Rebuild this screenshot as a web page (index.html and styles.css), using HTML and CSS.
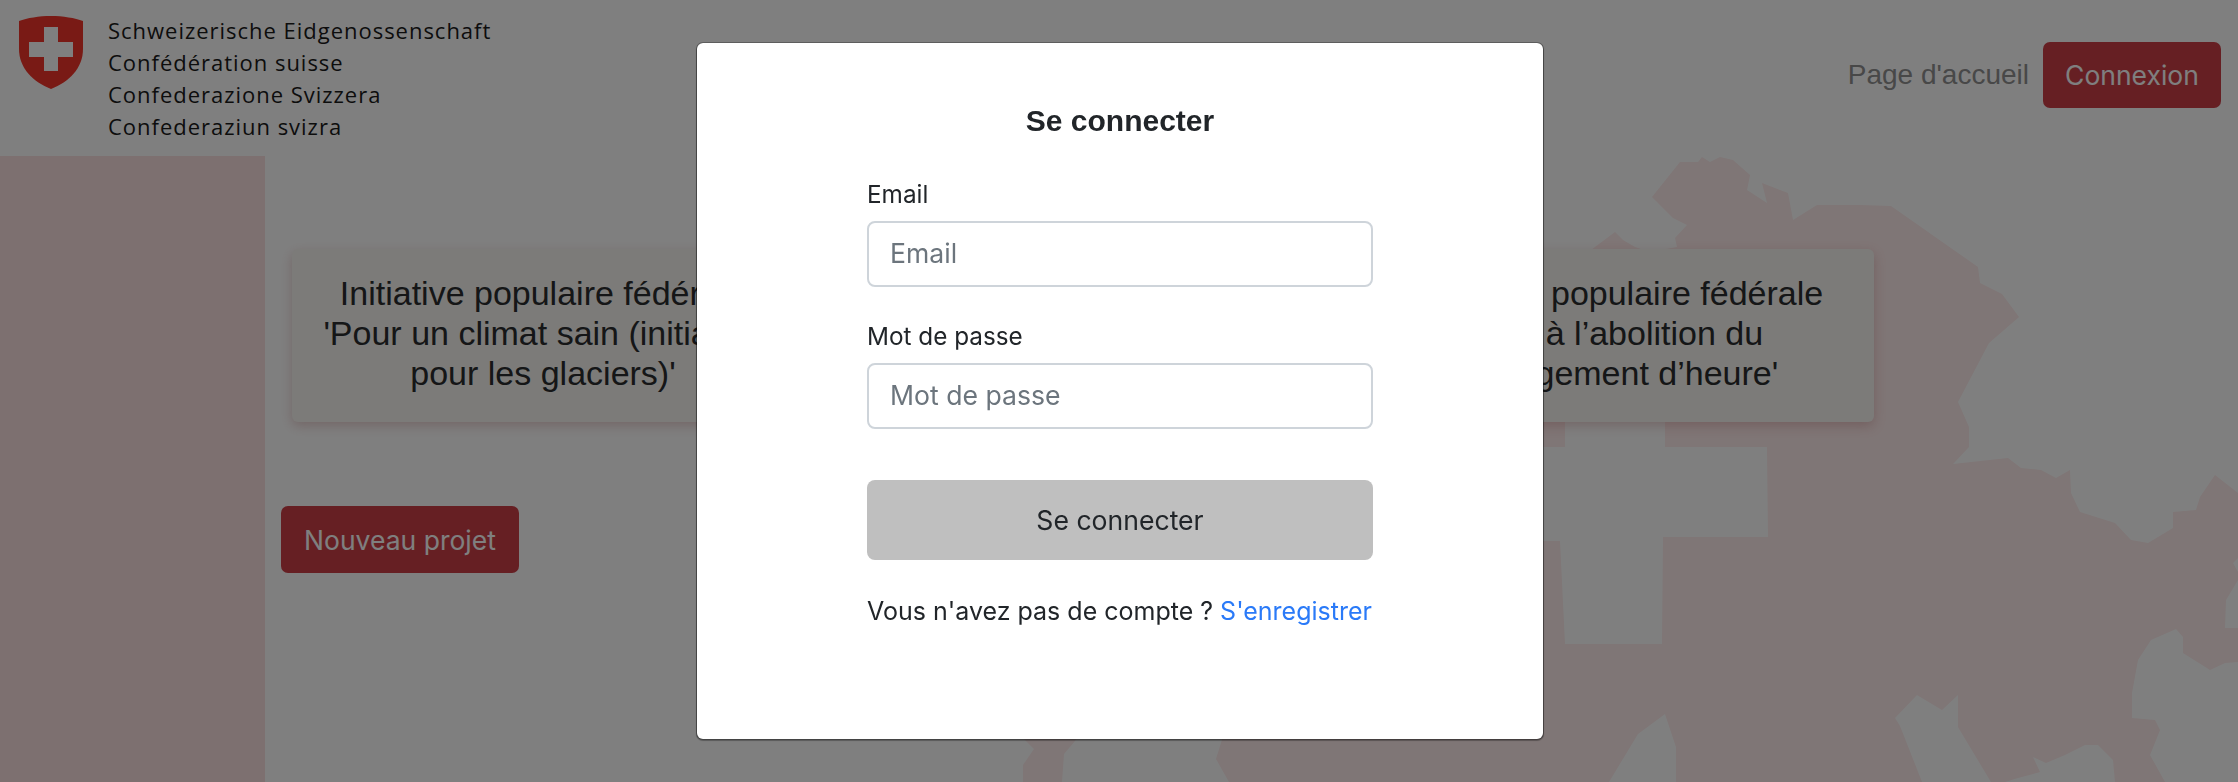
FILE: index.html
```html
<!DOCTYPE html>
<html lang="fr">
<head>
  <meta charset="UTF-8" />
  <title>Connexion</title>
  <link rel="stylesheet" href="styles.css">
</head>
<body>
  <header class="topbar">
    <div class="brand">
      <svg class="shield" viewBox="0 0 64 73" aria-hidden="true">
        <path class="shield-red" d="M0 5 C8 2 20 0 32 0 C44 0 56 2 64 5 L64 33 C64 52 50 66 32 73 C14 66 0 52 0 33 Z"/>
        <path class="shield-cross" d="M25 11 H39 V26 H54 V41 H39 V55 H25 V41 H10 V26 H25 Z"/>
      </svg>
      <div class="brand-name">
        <div>Schweizerische Eidgenossenschaft</div>
        <div>Confédération suisse</div>
        <div>Confederazione Svizzera</div>
        <div>Confederaziun svizra</div>
      </div>
    </div>
    <nav class="nav">
      <a class="nav-link" href="#">Page d'accueil</a>
      <a class="btn-red" href="#">Connexion</a>
    </nav>
  </header>

  <main class="main">
    <svg class="map" viewBox="0 156 2238 626" aria-hidden="true">
      <path class="map-land" d="M1595 247 L1615 232 L1623 240 L1635 247 L1650 252 L1677 247 L1675 238 L1687 225 L1673 218 L1652 197 L1680 162 L1698 162 L1702 157 L1710 162 L1720 157 L1733 160 L1750 175 L1747 190 L1767 203 L1762 183 L1788 193 L1793 220 L1817 205 L1860 205 L1891 206 L1978 267 L1980 283 L2002 294 L2019 317 L1989 343 L1958 402 L1969 427 L1969 447 L1953 464 L2008 458 L2021 468 L2041 470 L2056 478 L2070 470 L2071 493 L2080 512 L2115 523 L2131 540 L2148 543 L2173 528 L2173 512 L2196 510 L2200 497 L2215 475 L2238 493 L2238 558 L2233 563 L2238 572 L2238 580 L2226 600 L2225 628 L2238 628 L2238 662 L2225 663 L2210 670 L2183 653 L2183 637 L2176 629 L2151 640 L2138 660 L2132 693 L2132 718 L2155 720 L2160 730 L2150 755 L2165 782 L2115 782 L2113 760 L2098 745 L2085 745 L2065 755 L2046 763 L2033 757 L2040 772 L2018 778 L2005 782 L1991 782 L1958 727 L1958 695 L1942 710 L1917 695 L1895 718 L1900 726 L1922 782 L1676 782 L1676 747 L1665 714 L1638 734 L1609 782 L1229 782 L1216 759 L1225 730 L1400 400 Z"/>
      <path class="map-land" d="M1020 735 L1034 749 L1023 765 L1023 782 L1062 782 L1064 754 L1080 735 Z"/>
      <path class="map-cross" d="M1565 400 L1665 400 L1665 447 L1767 447 L1768 537 L1663 537 L1662 644 L1565 644 L1560 541 L1400 541 L1400 447 L1565 447 Z"/>
    </svg>
    <aside class="sidebar"></aside>
    <section class="content">
      <div class="projects">
        <div class="project-card">Initiative populaire fédérale 'Pour un climat sain (initiative pour les glaciers)'</div>
        <div class="project-card">Initiative populaire fédérale 'Oui à l’abolition du changement d’heure'</div>
      </div>
      <a class="btn-red btn-new" href="#">Nouveau projet</a>
    </section>
  </main>

  <div class="backdrop">
    <div class="modal">
      <h2 class="modal-title">Se connecter</h2>
      <form class="login-form">
        <div class="field">
          <label for="email">Email</label>
          <input id="email" type="email" placeholder="Email" />
        </div>
        <div class="field">
          <label for="password">Mot de passe</label>
          <input id="password" type="password" placeholder="Mot de passe" />
        </div>
        <button class="btn-submit" type="button">Se connecter</button>
        <p class="register">Vous n'avez pas de compte ? <a href="#">S'enregistrer</a></p>
      </form>
    </div>
  </div>
</body>
</html>
```

FILE: styles.css
```css
* {
  box-sizing: border-box;
}

body {
  margin: 0;
  height: 782px;
  overflow: hidden;
  background-color: #fff;
  font-family: "Inter", "Liberation Sans", sans-serif;
}

a {
  text-decoration: none;
}

.topbar {
  display: flex;
  justify-content: space-between;
  height: 156px;
  background-color: #fff;
}

.brand {
  display: flex;
  padding: 14px 0 0 19px;
}

.shield {
  width: 64px;
  height: 73px;
  margin: 2px 25px 0 0;
}

.shield-red {
  fill: #f2352a;
}

.shield-cross {
  fill: #fff;
}

.brand-name {
  font-family: "Open Sans", sans-serif;
  font-size: 22px;
  line-height: 32px;
  letter-spacing: 0.98px;
  color: #1a1a1a;
}

.nav {
  display: flex;
  align-items: center;
  gap: 14px;
  height: 66px;
  margin: 42px 17px 0 0;
}

.nav-link {
  font-family: "Liberation Sans", sans-serif;
  font-size: 28px;
  color: #909090;
}

.btn-red {
  display: flex;
  align-items: center;
  justify-content: center;
  width: 178px;
  height: 66px;
  border-radius: 7px;
  background-color: #cc3f47;
  font-size: 26.5px;
  color: #fff;
}

.main {
  position: relative;
  display: flex;
  height: 626px;
  overflow: hidden;
}

.map {
  position: absolute;
  top: 0;
  left: 0;
  width: 2238px;
  height: 626px;
}

.map-land {
  fill: #ffecec;
}

.map-cross {
  fill: #fff;
}

.sidebar {
  position: relative;
  width: 265px;
  background-color: #fae0e0;
}

.content {
  position: relative;
  padding: 93px 0 0 16px;
}

.projects {
  display: flex;
  justify-content: space-between;
  width: 1582px;
  margin-left: 10.5px;
}

.project-card {
  width: 505px;
  height: 173px;
  padding: 24px 31px 0 29px;
  border-radius: 6px;
  background-color: #f8f6f2;
  box-shadow: 0 4px 12px rgba(160, 60, 60, 0.25);
  font-family: "Liberation Sans", sans-serif;
  font-size: 34px;
  line-height: 40px;
  text-align: center;
  color: #2a2c2e;
}

.btn-new {
  width: 238px;
  height: 67px;
  margin-top: 84px;
}

.backdrop {
  position: fixed;
  top: 0;
  right: 0;
  bottom: 0;
  left: 0;
  display: flex;
  align-items: center;
  justify-content: center;
  padding-left: 2px;
  background-color: rgba(0, 0, 0, 0.5);
}

.modal {
  display: flex;
  flex-direction: column;
  align-items: center;
  width: 848px;
  height: 698px;
  padding-top: 61px;
  border: 1px solid rgba(0, 0, 0, 0.25);
  border-radius: 7px;
  background-color: #fff;
  background-clip: padding-box;
  box-shadow: 0 1px 1px rgba(0, 0, 0, 0.3);
}

.modal-title {
  margin: 0 0 42px;
  font-family: "Liberation Sans", sans-serif;
  font-size: 30px;
  font-weight: bold;
  line-height: 34px;
  color: #212529;
}

.login-form {
  width: 506px;
}

.field {
  margin-bottom: 35px;
}

.field label {
  display: block;
  height: 29px;
  margin-bottom: 12px;
  font-size: 24.3px;
  line-height: 29px;
  color: #212529;
}

.field input {
  display: block;
  width: 100%;
  height: 66px;
  padding: 0 21px 2px;
  border: 2px solid #ced4da;
  border-radius: 8px;
  font-family: inherit;
  font-size: 26.6px;
  color: #212529;
  outline: none;
}

.field input::placeholder {
  color: #6c757d;
}

.btn-submit {
  display: block;
  width: 100%;
  height: 80px;
  margin-top: 51px;
  border: none;
  border-radius: 8px;
  background-color: #bfbfbf;
  font-family: inherit;
  font-size: 26.6px;
  color: #212529;
}

.register {
  margin: 36px 0 0;
  font-size: 25px;
  line-height: 30px;
  white-space: nowrap;
  color: #212529;
}

.register a {
  color: #2a7af8;
}
```
